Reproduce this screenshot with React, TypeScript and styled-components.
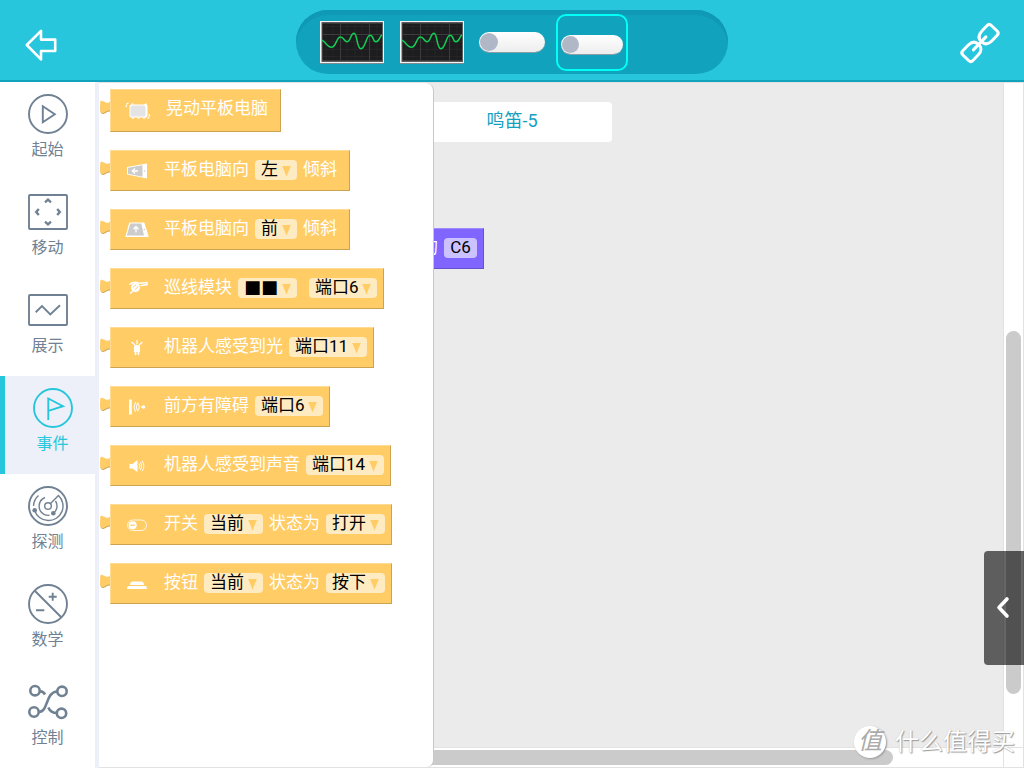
import React from "react";
import styled, { createGlobalStyle, css } from "styled-components";

const fontStack = `Roboto, "Noto Sans CJK SC", sans-serif`;
const symbolStack = `"DejaVu Sans", sans-serif`;

const colors = {
  brand: "#28c6dc",
  brandDark: "#11a2be",
  brandShade: "#0f99b4",
  highlight: "#00fff4",
  ink: "#6f8192",
  pale: "#edf0f8",
  canvas: "#ebebeb",
  line: "#e2e2e2",
  thumb: "#cbcbcb",
  event: "#ffcc66",
  eventLight: "#ffdb94",
  eventDark: "#cca352",
  field: "#ffebc2",
};

const GlobalStyle = createGlobalStyle`
  *, *::before, *::after { box-sizing: border-box; }
  body { margin: 0; font-family: ${fontStack}; font-size: 17px; background: #fff; }
  button, select, input { font: inherit; margin: 0; padding: 0; border: 0; background: none; color: inherit; }
  svg { display: block; flex: none; }
`;

const Page = styled.div`
  display: flex;
  flex-direction: column;
  min-height: 100vh;
`;

/* ---------- header ---------- */

const Header = styled.header`
  display: grid;
  grid-template-columns: 1fr 432px 1fr;
  align-items: center;
  height: 82px;
  padding: 4px 22px 0;
  background: ${colors.brand};
  border-bottom: 2px solid ${colors.brandDark};
`;

const IconButton = styled.button<{ $end?: boolean }>`
  justify-self: ${(p) => (p.$end ? "end" : "start")};
  padding: ${(p) => (p.$end ? "2px 0 0" : "6px 2px 0")};
  color: #fff;
  cursor: pointer;
`;

const DeviceTray = styled.div`
  display: flex;
  align-items: center;
  height: 64px;
  padding-left: 16px;
  border-radius: 32px;
  background: ${colors.brandDark};
  box-shadow: inset 0 5px 0 ${colors.brandShade};
`;

const DeviceSlot = styled.div`
  display: flex;
  align-items: center;
  justify-content: center;
  width: 80px;
`;

const SelectedFrame = styled.div`
  display: flex;
  align-items: center;
  justify-content: center;
  width: 72px;
  height: 57px;
  padding-top: 4px;
  border: 2px solid ${colors.highlight};
  border-radius: 10px;
`;

const Toggle = styled.input<{ $small?: boolean }>`
  appearance: none;
  display: flex;
  align-items: center;
  width: ${(p) => (p.$small ? 62 : 66)}px;
  height: ${(p) => (p.$small ? 19 : 20)}px;
  padding-left: 1px;
  border-radius: 10px;
  background: linear-gradient(#fff, #ededed);
  box-shadow: 0 1px 0 #8c9ea5;

  &::before {
    content: "";
    width: ${(p) => (p.$small ? 17 : 18)}px;
    height: ${(p) => (p.$small ? 17 : 18)}px;
    border-radius: 50%;
    background: #b0b7c6;
  }
`;

/* ---------- category bar ---------- */

const Main = styled.div`
  display: flex;
  flex: 1;
`;

const Categories = styled.nav`
  display: flex;
  flex-direction: column;
  flex: none;
  width: 99px;
  border-right: 4px solid ${colors.pale};
`;

const Category = styled.button<{ $active?: boolean }>`
  display: flex;
  flex-direction: column;
  align-items: center;
  height: 98px;
  padding-top: 12px;
  font-size: 16px;
  line-height: 24px;
  color: ${colors.ink};
  cursor: pointer;

  svg {
    margin-bottom: 4px;
  }

  ${(p) =>
    p.$active &&
    css`
      padding-left: 5px;
      border-left: 5px solid ${colors.brand};
      background: ${colors.pale};
      color: ${colors.brand};
    `}
`;

/* ---------- workspace ---------- */

const Workspace = styled.main`
  position: relative;
  display: grid;
  grid-template-columns: 1fr 21px;
  grid-template-rows: 1fr 21px;
  flex: 1;
  border-top: 1px solid ${colors.line};
`;

const Canvas = styled.section`
  position: relative;
  overflow: hidden;
  padding: 19px 0 0 313px;
  background: ${colors.canvas};
`;

const ScriptTitle = styled.h1`
  width: 200px;
  margin: 0;
  padding-bottom: 2px;
  border-radius: 4px;
  background: #fff;
  color: #16a0bf;
  font-size: 18px;
  font-weight: 400;
  line-height: 38px;
  text-align: center;
`;

const VerticalTrack = styled.div`
  display: flex;
  flex-direction: column;
  align-items: center;
  border: solid ${colors.line};
  border-width: 0 1px;
`;

const HorizontalTrack = styled.div`
  display: flex;
  align-items: center;
  border: solid ${colors.line};
  border-width: 1px 0;
`;

const TrackCorner = styled.div`
  border: 1px solid ${colors.line};
`;

const Thumb = styled.div<{ $share: number; $vertical?: boolean }>`
  flex: ${(p) => p.$share} 0 0;
  ${(p) => (p.$vertical ? "width: 15px;" : "height: 15px;")}
  border-radius: 8px;
  background: ${colors.thumb};
`;

const TrackGap = styled.div<{ $share: number }>`
  flex: ${(p) => p.$share} 0 0;
`;

const NoteBlock = styled.div`
  position: absolute;
  left: 315px;
  top: 145px;
  display: flex;
  align-items: flex-start;
  height: 41px;
  padding: 9px 6px 0;
  border: 1px solid;
  border-color: #a08cff #6652cc #6652cc #a08cff;
  background: #8066ff;
  color: #fff;
  line-height: 18px;
`;

const NoteInput = styled.input`
  width: 33px;
  height: 20px;
  margin-left: 6px;
  padding-bottom: 2px;
  border-radius: 4px;
  background: #ccc2ff;
  color: #000;
  text-align: center;
`;

const Flyout = styled.aside`
  position: absolute;
  left: 0;
  top: 0;
  bottom: 0;
  width: 335px;
  padding: 6px 0 0 1px;
  border-right: 1px solid #c8c8c8;
  border-bottom: 1px solid ${colors.line};
  border-radius: 0 8px 8px 0;
  background: #fff;
`;

const BlockList = styled.ul`
  display: flex;
  flex-direction: column;
  gap: 18px;
  margin: 0;
  padding: 0;
  list-style: none;
`;

const BlockRow = styled.li`
  display: flex;
  align-items: flex-start;
`;

const TabNotch = styled.svg`
  margin-top: 10px;
`;

const BlockBody = styled.div<{ $tall?: boolean }>`
  display: flex;
  align-items: flex-start;
  height: ${(p) => (p.$tall ? 43 : 41)}px;
  border: 1px solid;
  border-color: ${colors.eventLight} ${colors.eventDark} ${colors.eventDark} ${colors.eventLight};
  background: ${colors.event};

  > svg {
    margin: ${(p) => (p.$tall ? "11px 14px 0 11px" : "10px 12px 0 11px")};
  }
`;

const BlockText = styled.span`
  padding-top: 9px;
  color: #fff;
  line-height: 18px;
  white-space: nowrap;

  &:last-child {
    margin-right: 12px;
  }
`;

const Field = styled.span<{ $width: number }>`
  display: grid;
  align-items: center;
  width: ${(p) => p.$width}px;
  height: 20px;
  margin: 9px 6px 0;

  &::after {
    content: "";
    grid-area: 1 / 1;
    justify-self: end;
    width: 9px;
    height: 11px;
    margin: 2px 6px 0 0;
    background: ${colors.event};
    clip-path: polygon(0 0, 100% 0, 50% 100%);
    pointer-events: none;
  }
`;

const FieldSelect = styled.select<{ $symbols?: boolean }>`
  appearance: none;
  grid-area: 1 / 1;
  width: 100%;
  height: 20px;
  padding: 0 0 2px 6px;
  border-radius: 4px;
  background: ${colors.field};
  color: #000;
  line-height: 18px;
  cursor: pointer;

  ${(p) =>
    p.$symbols &&
    css`
      font-family: ${symbolStack};
      font-size: 18px;
    `}
`;

const DrawerHandle = styled.button`
  position: absolute;
  right: 0;
  bottom: 103px;
  display: flex;
  align-items: center;
  justify-content: center;
  width: 40px;
  height: 114px;
  border-radius: 4px 0 0 4px;
  background: rgba(0, 0, 0, 0.6);
  color: #fff;
  cursor: pointer;
`;

const Watermark = styled.div`
  position: absolute;
  right: 9px;
  bottom: 9px;
  display: flex;
  align-items: center;
  gap: 9px;
  color: #fff;
  font-size: 24px;
  line-height: 34px;
  text-shadow: 1px 1px 1px #999, 0 0 1px #bbb;
`;

const WatermarkSeal = styled.span`
  width: 32px;
  height: 32px;
  border-radius: 50%;
  background: #fff;
  box-shadow: 1px 1px 2px #999;
  color: #aaa;
  font-size: 24px;
  font-style: italic;
  line-height: 31px;
  text-align: center;
  text-shadow: none;
`;

/* ---------- drawings ---------- */

const BackArrow = () => (
  <svg width="34" height="34" viewBox="0 0 34 34" fill="none" stroke="currentColor" strokeWidth="2.6" strokeLinejoin="round">
    <path d="M2.8 17 17 2.8V11.6H31.2V23H17V31.4Z" />
  </svg>
);

const LinkIcon = () => (
  <svg width="44" height="44" viewBox="-22 -22 44 44" fill="none" stroke="currentColor" strokeWidth="3" strokeLinecap="round">
    <g transform="rotate(-46)">
      <path d="M-10-7H-17.5Q-20.5-7-20.5-4V4Q-20.5 7-17.5 7H-10C-4.500 7-2 4.5-2 0S-4.500-7-10-7Z" />
      <path d="M10-7H17.5Q20.5-7 20.5-4V4Q20.5 7 17.5 7H10C4.500 7 2 4.5 2 0S4.500-7 10-7Z" />
      <path d="M-9.500 0H8.500" />
    </g>
  </svg>
);

const Scope = () => (
  <svg width="64" height="43" viewBox="0 0 64 43">
    <rect width="64" height="43" fill="#7d8b90" />
    <rect width="64" height="42" fill="#f4f4f4" />
    <rect x="1.5" y="1" width="61.5" height="40" fill="#5c5c5c" />
    <rect x="2.5" y="2.5" width="59.5" height="37" fill="#1d1d1f" />
    <path d="M6 2V39M13 2V39M27 2V39M35 2V39M42 2V39M57 2V39M3 5.500H62M3 20.500H62M3 28.500H62M3 35.500H62" stroke="#2a2a2c" strokeWidth=".7" />
    <path d="M20.500 2V39M49.500 2V39M3 13.500H62" stroke="#3c3c3e" />
    <path
      d="M2 19.300C5 20 7 26.300 11.500 26.300S16.500 16 20.300 16 24 20.700 27.300 20.700 30.500 12.300 34 12.300 36.500 27.700 41 27.700 46 14.300 50 14.300 52.500 20.700 56 20.700 59.500 15 62 14"
      fill="none"
      stroke="#12cf55"
      strokeWidth="1.5"
    />
  </svg>
);

const Chevron = () => (
  <svg width="18" height="24" viewBox="0 0 18 24" fill="none" stroke="currentColor" strokeWidth="3.6" strokeLinecap="round" strokeLinejoin="round">
    <path d="M12 3 4 11.500 12 20" />
  </svg>
);

const CategoryIcon = ({ children }: { children: React.ReactNode }) => (
  <svg width="40" height="40" viewBox="0 0 40 40" fill="none" stroke="currentColor" strokeWidth="1.9">
    {children}
  </svg>
);

const Tab = () => (
  <TabNotch width="10" height="16" viewBox="0 0 10 16">
    <path d="M10 6V12.500C7.500 12 6.500 13.500 4.500 14.600 2.800 15.400 .5 14.500 .5 12V6Z" fill={colors.eventDark} />
    <path d="M10 2.500C9 4 7.500 4.200 5.500 3.300L2.500 2C1.200 1.400 .2 2 .2 3.500V11C.2 13.600 2 14.700 4 13.700 6.500 12.300 7.500 11 10 11.500Z" fill={colors.event} />
  </TabNotch>
);

const BlockIcon = ({ children }: { children: React.ReactNode }) => (
  <svg width="30" height="20" viewBox="0 0 30 20" fill="#fff">
    {children}
  </svg>
);

/* ---------- data ---------- */

const categories: { name: string; active?: boolean; icon: React.ReactNode }[] = [
  {
    name: "起始",
    icon: (
      <>
        <circle cx="20" cy="20" r="19" />
        <path d="M14.800 12.200V28.200L26.800 20.200Z" />
      </>
    ),
  },
  {
    name: "移动",
    icon: (
      <>
        <rect x="1" y="3" width="38" height="34" rx="1" />
        <path strokeWidth="2.400" d="M17 10.300 20 7.700 23 10.300M17 29.700 20 32.300 23 29.700M10.800 17 8.200 20 10.800 23M29.200 17 31.800 20 29.200 23" />
      </>
    ),
  },
  {
    name: "展示",
    icon: (
      <>
        <rect x="1" y="5" width="38" height="30" rx="1" />
        <path d="M7.700 22.200 14 16 22.300 24.500 32 15.200" />
      </>
    ),
  },
  {
    name: "事件",
    active: true,
    icon: (
      <>
        <circle cx="20" cy="20" r="19" />
        <path d="M15.300 32V10.500L30 18.200 15.300 22.800" />
      </>
    ),
  },
  {
    name: "探测",
    icon: (
      <>
        <circle cx="20" cy="20" r="19" />
        <g strokeWidth="1.400">
          <circle cx="20" cy="20" r="3.300" />
          <path d="M22.500 17.500 30.500 9.500A14.500 14.500 0 0 1 20 34.500 14.500 14.500 0 0 1 6.500 24M5.500 20A14.500 14.500 0 0 1 10.500 9.500M27.500 15A9.300 9.300 0 0 1 25.500 27.300M17 11.500A9.300 9.300 0 0 0 16 28.300 9.300 9.300 0 0 0 21.500 29.300" />
        </g>
        <circle cx="6.700" cy="24.300" r="2.300" fill="currentColor" stroke="none" />
        <circle cx="25.300" cy="27.300" r="2.300" fill="currentColor" stroke="none" />
      </>
    ),
  },
  {
    name: "数学",
    icon: (
      <>
        <circle cx="20" cy="20" r="19" />
        <path d="M6.500 6.500 33.500 33.500M24.700 8.700V16.700M20.700 12.700H28.700M8 26.300H16.300" />
      </>
    ),
  },
  {
    name: "控制",
    icon: (
      <g strokeWidth="2.600">
        <circle cx="7" cy="8.700" r="4.700" />
        <circle cx="34" cy="9.300" r="4.700" />
        <circle cx="6" cy="30" r="4.700" />
        <circle cx="33.500" cy="31.300" r="4.700" />
        <path d="M10.700 30C21 29.500 17 10 29.300 9.500M11.500 9.500C14 9 15.500 10 17 12.500M20.300 25.500C22 29.500 25 31 29 31" />
      </g>
    ),
  },
];

type Part = { text: string } | { field: string; value: string; width: number; symbols?: boolean };

const blocks: { tall?: boolean; icon: React.ReactNode; parts: Part[] }[] = [
  {
    tall: true,
    icon: (
      <>
        <rect x="7.500" y="3.500" width="18" height="13" rx="2" />
        <path d="M9 3.500 10.500 2 12 3.500M22 3.500 24 2 25.500 5M9 16.500 11 18 13 16.500M15 16.500 16.500 18 18 16.500M20 16.500 22 18 24 16.500" />
        <rect x="8.500" y="4.500" width="15" height="11" rx="1.500" fill="#e4e4e4" />
        <path d="M6.500 2.200Q3.800 2.500 4.500 6M27 13Q28.500 16 25.500 17.500" fill="none" stroke="#fff" strokeWidth="1.300" strokeDasharray="2.500 .8" />
      </>
    ),
    parts: [{ text: "晃动平板电脑" }],
  },
  {
    icon: (
      <>
        <path d="M5 6 25 2.500V17.500L5 13.500Z" />
        <path d="M6 6.800 20.500 4.200V15.800L6 12.800Z" fill="#ccc" />
        <path d="M16 10H10.500M13 7.500 10.300 10 13 12.500" fill="none" stroke="#fff" strokeWidth="1.300" />
        <circle cx="22.500" cy="10" r=".8" fill="#ccc" />
      </>
    ),
    parts: [{ text: "平板电脑向" }, { field: "左右方向", value: "左", width: 42 }, { text: "倾斜" }],
  },
  {
    icon: (
      <>
        <path d="M7.300 2.500H22.300L26.800 17H3.300Z" />
        <path d="M8.300 3.500H19.300L22 15.500H4.800Z" fill="#ccc" />
        <path d="M14 12.500V7M11.500 9.200 14 6.500 16.500 9.200" fill="none" stroke="#fff" strokeWidth="1.300" />
        <circle cx="22.300" cy="9.500" r=".8" fill="#ccc" />
      </>
    ),
    parts: [{ text: "平板电脑向" }, { field: "前后方向", value: "前", width: 42 }, { text: "倾斜" }],
  },
  {
    icon: (
      <>
        <path d="M7.500 5.500Q12 1.800 17 4.300L25 3.600V5.600L18.500 6.800M11 12 8 14.500" fill="none" stroke="#fff" strokeWidth="1.500" />
        <circle cx="13.500" cy="8.500" r="4.500" />
        <path d="M11 8.500Q12 6.500 14 6M13 10.500 16.500 7.500" fill="none" stroke={colors.event} strokeWidth=".9" />
      </>
    ),
    parts: [
      { text: "巡线模块" },
      { field: "巡线状态", value: "■■", width: 59, symbols: true },
      { field: "巡线端口", value: "端口6", width: 68 },
    ],
  },
  {
    icon: (
      <>
        <path d="M9.500 4 13 7M15 2V6M20.500 4 17 7" stroke="#fff" strokeWidth="1.200" />
        <path d="M12 8.500Q12 6.800 15 6.800T18 8.500V14H17.300V17H15.600V14H14.400V17H12.700V14H12Z" />
      </>
    ),
    parts: [{ text: "机器人感受到光" }, { field: "光线端口", value: "端口11", width: 78 }],
  },
  {
    icon: (
      <>
        <rect x="7" y="2.500" width="2.800" height="15" />
        <path d="M13.500 5Q10.500 10 13.500 15M15.500 6Q13 10 15.500 14M15.500 5.500Q19 10 15.500 14.500" fill="none" stroke="#fff" />
        <circle cx="21.500" cy="10" r="1.800" />
        <rect x="19" y="9.300" width="4" height="1.400" />
      </>
    ),
    parts: [{ text: "前方有障碍" }, { field: "障碍端口", value: "端口6", width: 68 }],
  },
  {
    icon: (
      <>
        <path d="M7.500 8H10.500L15.500 4V16L10.500 12.500H7.500Z" />
        <path d="M17 7.500Q18.800 10 17 12.500M18.500 6Q21 10 18.500 14M20 4.800Q23.800 10 20 15.200" fill="none" stroke="#fff" />
      </>
    ),
    parts: [{ text: "机器人感受到声音" }, { field: "声音端口", value: "端口14", width: 78 }],
  },
  {
    icon: (
      <>
        <rect x="5.500" y="5" width="19" height="10.500" rx="5.250" fill="none" stroke="#fff" strokeWidth=".8" />
        <circle cx="10.700" cy="10.250" r="4" />
        <path d="M8.500 10.250H12.800" stroke={colors.event} strokeWidth="1.200" />
      </>
    ),
    parts: [
      { text: "开关" },
      { field: "开关时刻", value: "当前", width: 59 },
      { text: "状态为" },
      { field: "开关状态", value: "打开", width: 59 },
    ],
  },
  {
    icon: (
      <>
        <path d="M8 11Q8 7.500 11 7.500H19Q22 7.500 22 11Z" />
        <path d="M5.200 15V13.500Q5.200 12 7 12H23Q24.800 12 24.800 13.500V15Z" />
      </>
    ),
    parts: [
      { text: "按钮" },
      { field: "按钮时刻", value: "当前", width: 59 },
      { text: "状态为" },
      { field: "按钮状态", value: "按下", width: 59 },
    ],
  },
];

export default function App() {
  return (
    <Page>
      <GlobalStyle />
      <Header>
        <IconButton aria-label="返回">
          <BackArrow />
        </IconButton>
        <DeviceTray>
          <DeviceSlot>
            <Scope />
          </DeviceSlot>
          <DeviceSlot>
            <Scope />
          </DeviceSlot>
          <DeviceSlot>
            <Toggle type="checkbox" aria-label="开关一" />
          </DeviceSlot>
          <DeviceSlot>
            <SelectedFrame>
              <Toggle type="checkbox" aria-label="开关二" $small />
            </SelectedFrame>
          </DeviceSlot>
        </DeviceTray>
        <IconButton aria-label="连接" $end>
          <LinkIcon />
        </IconButton>
      </Header>

      <Main>
        <Categories>
          {categories.map((c) => (
            <Category key={c.name} $active={c.active}>
              <CategoryIcon>{c.icon}</CategoryIcon>
              {c.name}
            </Category>
          ))}
        </Categories>

        <Workspace>
          <Canvas>
            <ScriptTitle>鸣笛-5</ScriptTitle>
            <NoteBlock>
              <label htmlFor="note">的</label>
              <NoteInput id="note" defaultValue="C6" />
            </NoteBlock>
          </Canvas>
          <VerticalTrack>
            <TrackGap $share={248} />
            <Thumb $share={363} $vertical />
            <TrackGap $share={53} />
          </VerticalTrack>
          <HorizontalTrack>
            <Thumb $share={794} />
            <TrackGap $share={110} />
          </HorizontalTrack>
          <TrackCorner />

          <Flyout>
            <BlockList>
              {blocks.map((block, i) => (
                <BlockRow key={i}>
                  <Tab />
                  <BlockBody $tall={block.tall}>
                    <BlockIcon>{block.icon}</BlockIcon>
                    {block.parts.map((part, j) =>
                      "text" in part ? (
                        <BlockText key={j}>{part.text}</BlockText>
                      ) : (
                        <Field key={j} $width={part.width}>
                          <FieldSelect aria-label={part.field} $symbols={part.symbols}>
                            <option>{part.value}</option>
                          </FieldSelect>
                        </Field>
                      ),
                    )}
                  </BlockBody>
                </BlockRow>
              ))}
            </BlockList>
          </Flyout>

          <DrawerHandle aria-label="展开">
            <Chevron />
          </DrawerHandle>
          <Watermark>
            <WatermarkSeal>值</WatermarkSeal>
            什么值得买
          </Watermark>
        </Workspace>
      </Main>
    </Page>
  );
}
